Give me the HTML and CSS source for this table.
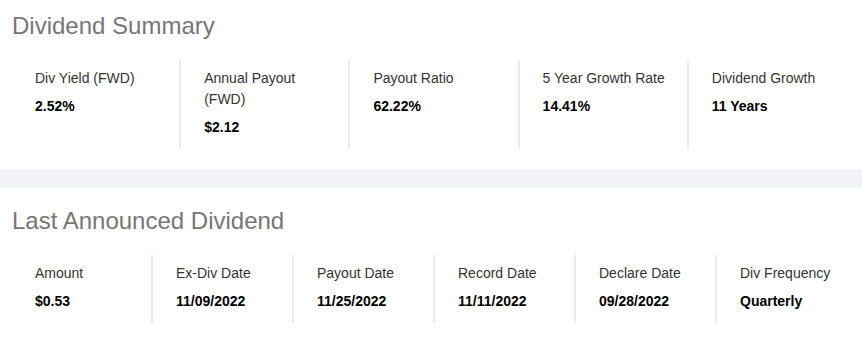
FILE: index.html
```html
<!DOCTYPE html>
<html lang="en">
<head>
<meta charset="utf-8">
<title>Dividends</title>
<link rel="stylesheet" href="styles.css">
</head>
<body>
  <section class="panel panel-first">
    <h2 class="title">Dividend Summary</h2>
    <div class="stats stats-5">
      <div class="stat"><div class="label">Div Yield (FWD)</div><div class="value">2.52%</div></div>
      <div class="stat"><div class="label">Annual Payout (FWD)</div><div class="value">$2.12</div></div>
      <div class="stat"><div class="label">Payout Ratio</div><div class="value">62.22%</div></div>
      <div class="stat"><div class="label">5 Year Growth Rate</div><div class="value">14.41%</div></div>
      <div class="stat"><div class="label">Dividend Growth</div><div class="value">11 Years</div></div>
    </div>
  </section>
  <div class="band"></div>
  <section class="panel">
    <h2 class="title">Last Announced Dividend</h2>
    <div class="stats stats-6">
      <div class="stat"><div class="label">Amount</div><div class="value">$0.53</div></div>
      <div class="stat"><div class="label">Ex-Div Date</div><div class="value">11/09/2022</div></div>
      <div class="stat"><div class="label">Payout Date</div><div class="value">11/25/2022</div></div>
      <div class="stat"><div class="label">Record Date</div><div class="value">11/11/2022</div></div>
      <div class="stat"><div class="label">Declare Date</div><div class="value">09/28/2022</div></div>
      <div class="stat"><div class="label">Div Frequency</div><div class="value">Quarterly</div></div>
    </div>
  </section>
</body>
</html>
```
FILE: styles.css
```css
* { box-sizing: border-box; }
html, body {
  margin: 0;
  padding: 0;
  background: #ffffff;
  font-family: "Liberation Sans", Arial, sans-serif;
}
.panel {
  padding: 20px 6px 20px 10px;
}
.panel-first {
  padding-top: 12px;
}
.title {
  margin: 0 0 20px 2px;
  font-size: 24px;
  line-height: 28px;
  font-weight: normal;
  color: #767676;
}
.stats {
  display: grid;
}
.stats-5 { grid-template-columns: repeat(5, 1fr); }
.stats-6 { grid-template-columns: repeat(6, 1fr); }
.stat {
  border-left: 2px solid #ebebeb;
  padding: 8px 16px 11px 23px;
}
.stat:first-child {
  border-left-color: transparent;
}
.label {
  font-size: 14px;
  line-height: 21px;
  color: #333333;
}
.value {
  margin-top: 7px;
  font-size: 14px;
  line-height: 21px;
  font-weight: bold;
  color: #000000;
}
.band {
  height: 18px;
  background: #f2f3f6;
}
```
